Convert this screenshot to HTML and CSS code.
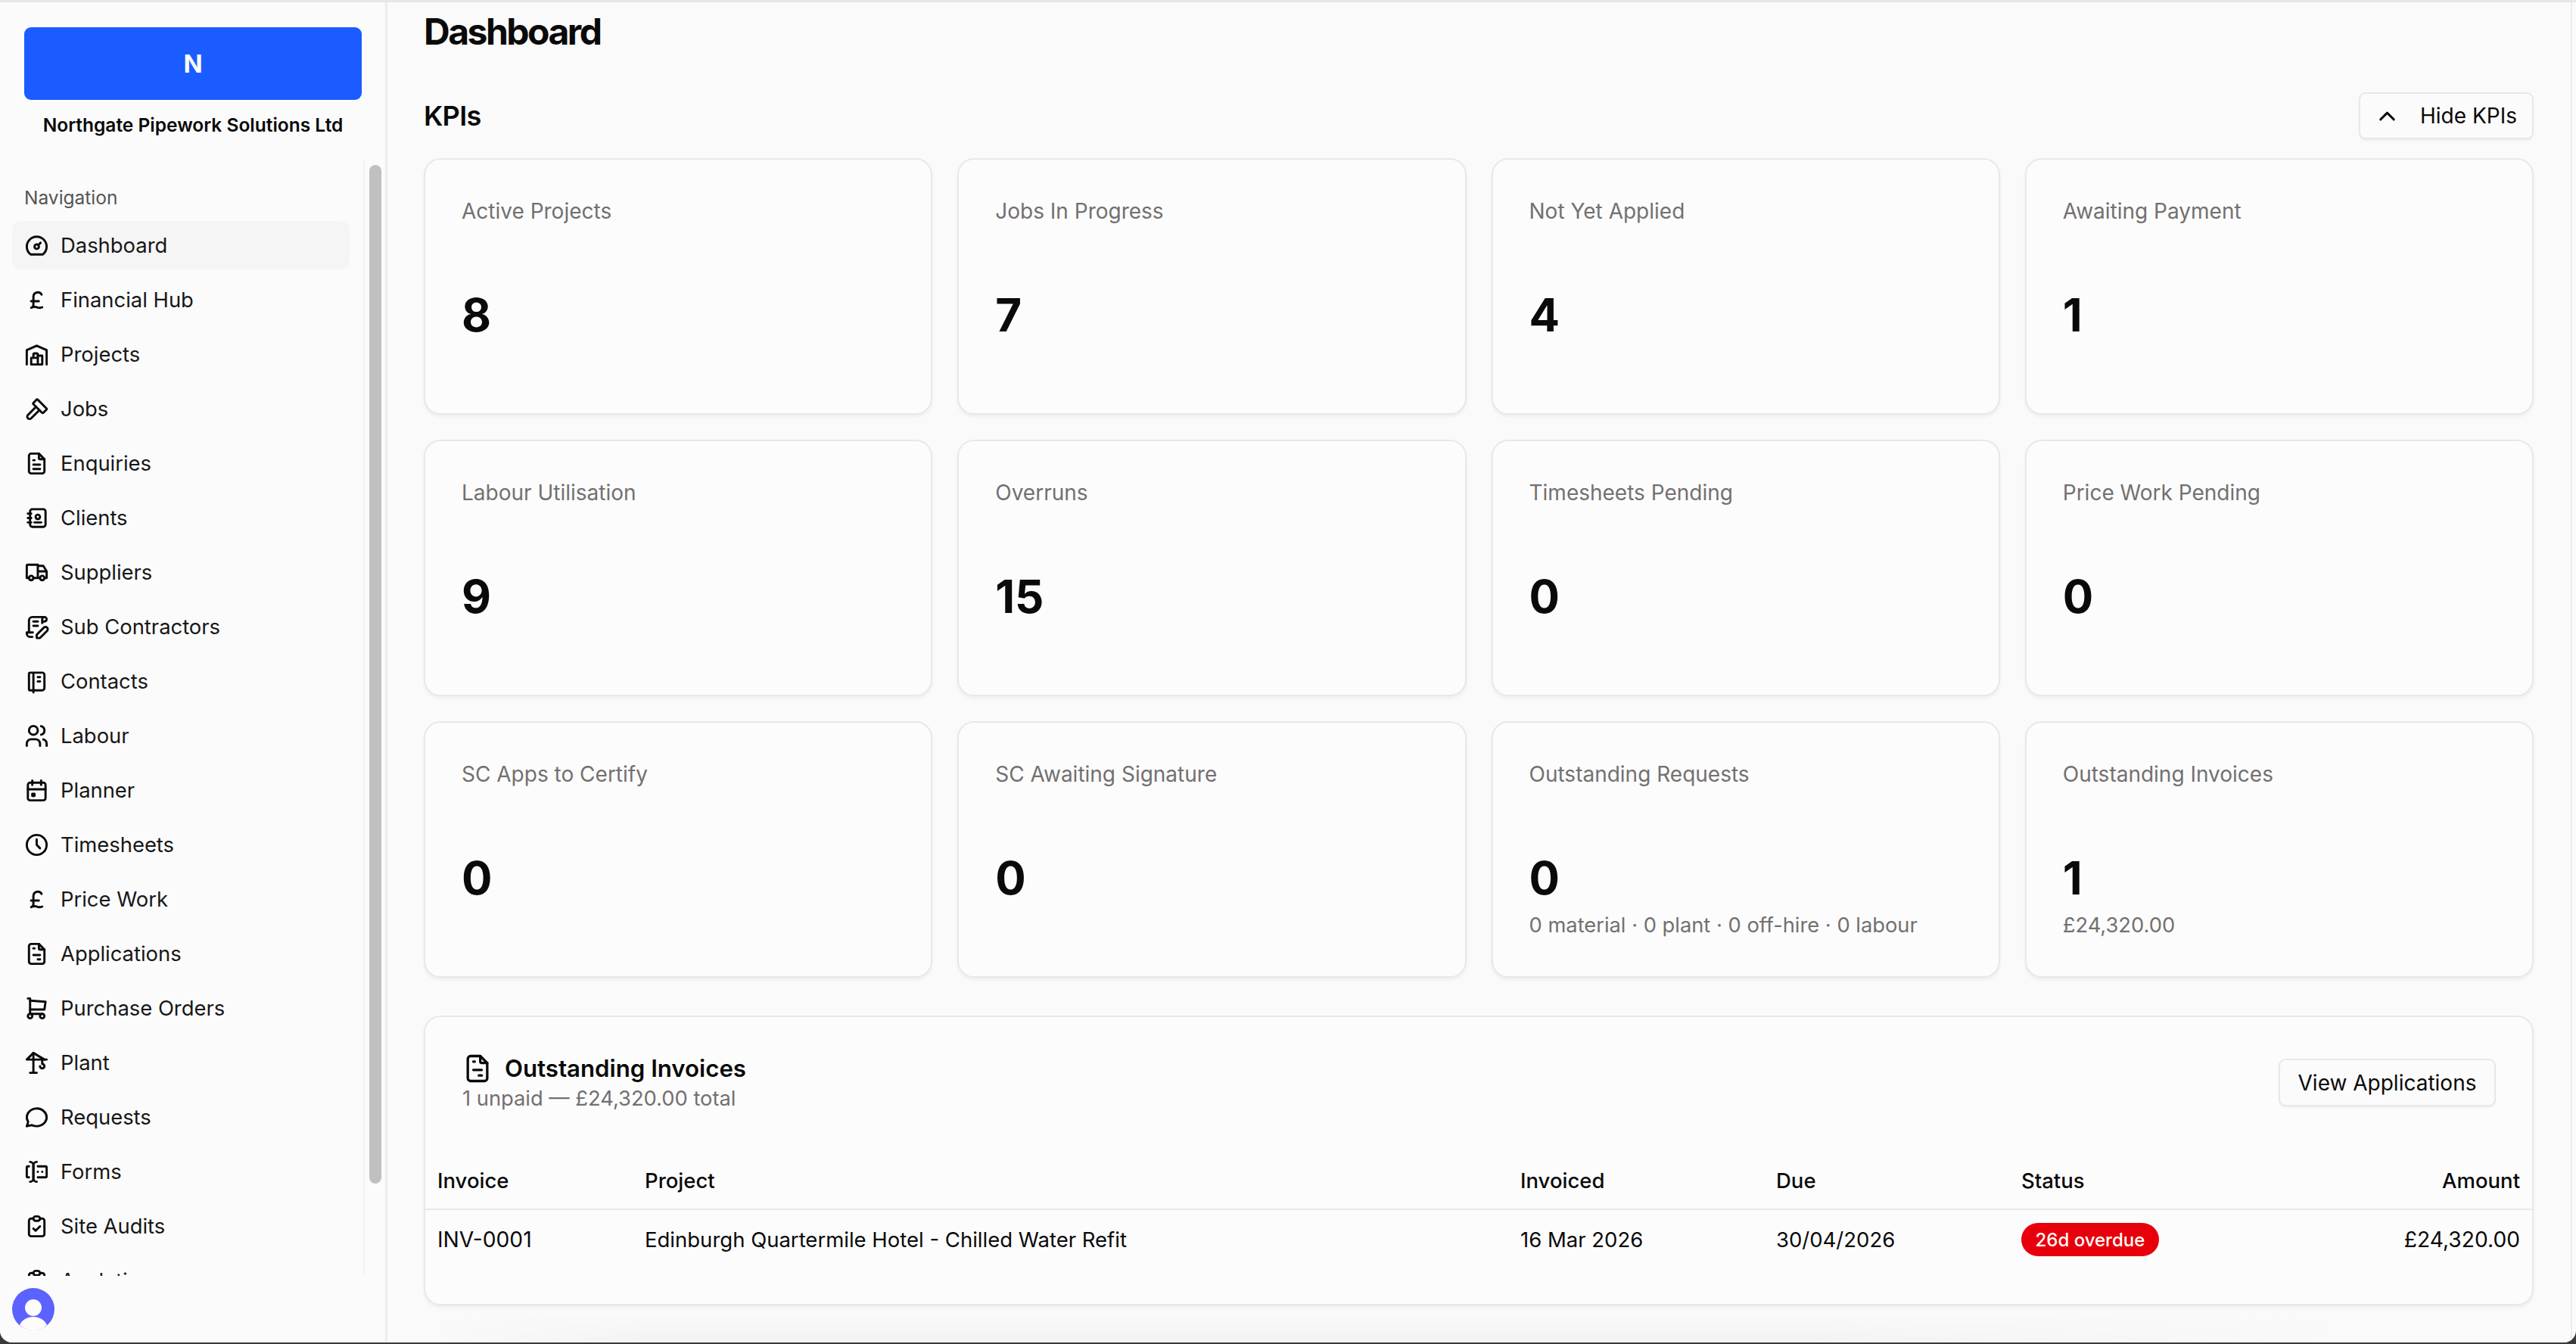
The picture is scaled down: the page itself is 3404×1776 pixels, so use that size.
FILE: index.html
```html
<!DOCTYPE html>
<html lang="en">
<head>
<meta charset="utf-8">
<title>Dashboard</title>
<link rel="stylesheet" href="styles.css">
</head>
<body>
<div class="window">
  <aside class="sidebar">
    <div class="brand">
      <div class="logo">N</div>
      <div class="company">Northgate Pipework Solutions Ltd</div>
    </div>
    <div class="nav-wrap">
      <nav class="nav">
        <div class="nav-label">Navigation</div>
        <a class="nav-item active"><svg class="ico" viewBox="0 0 24 24"><path d="M10 13a2 2 0 1 0 4 0a2 2 0 1 0 -4 0"/><path d="M13.45 11.55l2.05 -2.05"/><path d="M6.4 20a9 9 0 1 1 11.2 0z"/></svg><span>Dashboard</span></a>
        <a class="nav-item"><svg class="ico" viewBox="0 0 24 24"><path d="M17 18.5a6 6 0 0 1 -5 0a6 6 0 0 0 -5 .5a3 3 0 0 0 2 -2.5v-7.5a4 4 0 0 1 7.45 -2m-2.55 6h-7"/></svg><span>Financial Hub</span></a>
        <a class="nav-item"><svg class="ico" viewBox="0 0 24 24"><path d="M3 21v-13l9 -4l9 4v13"/><path d="M13 13h4v8h-10v-6h6"/><path d="M13 21v-9a1 1 0 0 0 -1 -1h-2a1 1 0 0 0 -1 1v3"/></svg><span>Projects</span></a>
        <a class="nav-item"><svg class="ico" viewBox="0 0 24 24"><path d="M11.414 10l-7.383 7.418a2.091 2.091 0 0 0 0 2.967a2.11 2.11 0 0 0 2.976 0l7.407 -7.385"/><path d="M18.121 15.293l2.586 -2.586a1 1 0 0 0 0 -1.414l-7.586 -7.586a1 1 0 0 0 -1.414 0l-2.586 2.586a1 1 0 0 0 0 1.414l7.586 7.586a1 1 0 0 0 1.414 0z"/></svg><span>Jobs</span></a>
        <a class="nav-item"><svg class="ico" viewBox="0 0 24 24"><path d="M14 3v4a1 1 0 0 0 1 1h4"/><path d="M17 21h-10a2 2 0 0 1 -2 -2v-14a2 2 0 0 1 2 -2h7l5 5v11a2 2 0 0 1 -2 2z"/><path d="M9 9h1"/><path d="M9 13h6"/><path d="M9 17h6"/></svg><span>Enquiries</span></a>
        <a class="nav-item"><svg class="ico" viewBox="0 0 24 24"><path d="M20 6v12a2 2 0 0 1 -2 2h-10a2 2 0 0 1 -2 -2v-12a2 2 0 0 1 2 -2h10a2 2 0 0 1 2 2z"/><path d="M10 16h6"/><path d="M11 11a2 2 0 1 0 4 0a2 2 0 1 0 -4 0"/><path d="M4 8h3"/><path d="M4 12h3"/><path d="M4 16h3"/></svg><span>Clients</span></a>
        <a class="nav-item"><svg class="ico" viewBox="0 0 24 24"><path d="M5 17a2 2 0 1 0 4 0a2 2 0 1 0 -4 0"/><path d="M15 17a2 2 0 1 0 4 0a2 2 0 1 0 -4 0"/><path d="M5 17h-2v-11a1 1 0 0 1 1 -1h9v12m-4 0h6m4 0h2v-6h-8m0 -5h5l3 5"/></svg><span>Suppliers</span></a>
        <a class="nav-item"><svg class="ico" viewBox="0 0 24 24"><path d="M8 21h-2a3 3 0 0 1 -3 -3v-1h5.5"/><path d="M17 8.5v-3.5a2 2 0 1 1 2 2h-2"/><path d="M19 3h-11a3 3 0 0 0 -3 3v11"/><path d="M9 7h4"/><path d="M9 11h4"/><path d="M18.42 12.61a2.1 2.1 0 0 1 2.97 2.97l-6.39 6.42h-3v-3z"/></svg><span>Sub Contractors</span></a>
        <a class="nav-item"><svg class="ico" viewBox="0 0 24 24"><path d="M6 4h11a2 2 0 0 1 2 2v12a2 2 0 0 1 -2 2h-11a1 1 0 0 1 -1 -1v-14a1 1 0 0 1 1 -1m3 0v18"/><path d="M13 8h2"/><path d="M13 12h2"/></svg><span>Contacts</span></a>
        <a class="nav-item"><svg class="ico" viewBox="0 0 24 24"><path d="M5 7a4 4 0 1 0 8 0a4 4 0 1 0 -8 0"/><path d="M3 21v-2a4 4 0 0 1 4 -4h4a4 4 0 0 1 4 4v2"/><path d="M16 3.13a4 4 0 0 1 0 7.75"/><path d="M21 21v-2a4 4 0 0 0 -3 -3.85"/></svg><span>Labour</span></a>
        <a class="nav-item"><svg class="ico" viewBox="0 0 24 24"><path d="M4 7a2 2 0 0 1 2 -2h12a2 2 0 0 1 2 2v12a2 2 0 0 1 -2 2h-12a2 2 0 0 1 -2 -2z"/><path d="M16 3v4"/><path d="M8 3v4"/><path d="M4 11h16"/><path d="M8 15h2v2h-2z"/></svg><span>Planner</span></a>
        <a class="nav-item"><svg class="ico" viewBox="0 0 24 24"><path d="M3 12a9 9 0 1 0 18 0a9 9 0 0 0 -18 0"/><path d="M12 7v5l3 3"/></svg><span>Timesheets</span></a>
        <a class="nav-item"><svg class="ico" viewBox="0 0 24 24"><path d="M17 18.5a6 6 0 0 1 -5 0a6 6 0 0 0 -5 .5a3 3 0 0 0 2 -2.5v-7.5a4 4 0 0 1 7.45 -2m-2.55 6h-7"/></svg><span>Price Work</span></a>
        <a class="nav-item"><svg class="ico" viewBox="0 0 24 24"><path d="M14 3v4a1 1 0 0 0 1 1h4"/><path d="M17 21h-10a2 2 0 0 1 -2 -2v-14a2 2 0 0 1 2 -2h7l5 5v11a2 2 0 0 1 -2 2z"/><path d="M9 7h1"/><path d="M9 13h6"/><path d="M13 17h2"/></svg><span>Applications</span></a>
        <a class="nav-item"><svg class="ico" viewBox="0 0 24 24"><path d="M4 19a2 2 0 1 0 4 0a2 2 0 1 0 -4 0"/><path d="M15 19a2 2 0 1 0 4 0a2 2 0 1 0 -4 0"/><path d="M17 17h-11v-14h-2"/><path d="M6 5l14 1l-1 7h-13"/></svg><span>Purchase Orders</span></a>
        <a class="nav-item"><svg class="ico" viewBox="0 0 24 24"><path d="M6 21h6"/><path d="M9 21v-18l-6 6h18"/><path d="M9 3l10 6"/><path d="M17 9v4a2 2 0 1 1 -2 2"/></svg><span>Plant</span></a>
        <a class="nav-item"><svg class="ico" viewBox="0 0 24 24"><path d="M3 20l1.3 -3.9c-2.324 -3.437 -1.426 -7.872 2.1 -10.374c3.526 -2.501 8.59 -2.296 11.845 .48c3.255 2.777 3.695 7.266 1.029 10.501c-2.666 3.235 -7.615 4.215 -11.574 2.293l-4.7 1"/></svg><span>Requests</span></a>
        <a class="nav-item"><svg class="ico" viewBox="0 0 24 24"><path d="M12 3a3 3 0 0 0 -3 3v12a3 3 0 0 0 3 3"/><path d="M6 3a3 3 0 0 1 3 3v12a3 3 0 0 1 -3 3"/><path d="M13 7h7a1 1 0 0 1 1 1v8a1 1 0 0 1 -1 1h-7"/><path d="M5 7h-1a1 1 0 0 0 -1 1v8a1 1 0 0 0 1 1h1"/><path d="M17 12h.01"/><path d="M13 12h.01"/></svg><span>Forms</span></a>
        <a class="nav-item"><svg class="ico" viewBox="0 0 24 24"><path d="M9 5h-2a2 2 0 0 0 -2 2v12a2 2 0 0 0 2 2h10a2 2 0 0 0 2 -2v-12a2 2 0 0 0 -2 -2h-2"/><path d="M9 5a2 2 0 0 1 2 -2h2a2 2 0 0 1 2 2a2 2 0 0 1 -2 2h-2a2 2 0 0 1 -2 -2z"/><path d="M9 14l2 2l4 -4"/></svg><span>Site Audits</span></a>
        <a class="nav-item"><svg class="ico" viewBox="0 0 24 24"><path d="M9 5h-2a2 2 0 0 0 -2 2v12a2 2 0 0 0 2 2h10a2 2 0 0 0 2 -2v-12a2 2 0 0 0 -2 -2h-2"/><path d="M9 5a2 2 0 0 1 2 -2h2a2 2 0 0 1 2 2a2 2 0 0 1 -2 2h-2a2 2 0 0 1 -2 -2z"/></svg><span>Analytics</span></a>
      </nav>
      <div class="track"><div class="thumb"></div></div>
    </div>
    <div class="side-foot">
      <svg class="avatar" viewBox="0 0 56 56"><circle class="av-bg" cx="28" cy="28" r="28"/><circle class="av-fg" cx="28" cy="26" r="11"/><path class="av-fg" d="M10 49c3-7 10-11 18-11s15 4 18 11c-5 4.500-11 7-18 7s-13-2.500-18-7z"/></svg>
    </div>
  </aside>
  <main class="main">
    <h1 class="title">Dashboard</h1>
    <div class="kpi-head">
      <h2 class="kpi-title">KPIs</h2>
      <button class="btn btn-toggle"><svg class="chev" viewBox="0 0 24 24"><path d="M6 15l6 -6l6 6"/></svg><span>Hide KPIs</span></button>
    </div>
    <section class="kpis">
      <div class="card"><div class="k-label">Active Projects</div><div class="k-value">8</div></div>
      <div class="card"><div class="k-label">Jobs In Progress</div><div class="k-value">7</div></div>
      <div class="card"><div class="k-label">Not Yet Applied</div><div class="k-value">4</div></div>
      <div class="card"><div class="k-label">Awaiting Payment</div><div class="k-value">1</div></div>
      <div class="card"><div class="k-label">Labour Utilisation</div><div class="k-value">9</div></div>
      <div class="card"><div class="k-label">Overruns</div><div class="k-value">15</div></div>
      <div class="card"><div class="k-label">Timesheets Pending</div><div class="k-value">0</div></div>
      <div class="card"><div class="k-label">Price Work Pending</div><div class="k-value">0</div></div>
      <div class="card"><div class="k-label">SC Apps to Certify</div><div class="k-value">0</div></div>
      <div class="card"><div class="k-label">SC Awaiting Signature</div><div class="k-value">0</div></div>
      <div class="card"><div class="k-label">Outstanding Requests</div><div class="k-value">0</div><div class="k-sub">0 material · 0 plant · 0 off-hire · 0 labour</div></div>
      <div class="card"><div class="k-label">Outstanding Invoices</div><div class="k-value">1</div><div class="k-sub">£24,320.00</div></div>
    </section>
    <section class="panel">
      <div class="panel-head">
        <div class="panel-text">
          <div class="panel-title"><svg class="panel-ico" viewBox="0 0 24 24"><path d="M14 3v4a1 1 0 0 0 1 1h4"/><path d="M17 21h-10a2 2 0 0 1 -2 -2v-14a2 2 0 0 1 2 -2h7l5 5v11a2 2 0 0 1 -2 2z"/><path d="M9 7h1"/><path d="M9 13h6"/><path d="M13 17h2"/></svg><span>Outstanding Invoices</span></div>
          <div class="panel-sub">1 unpaid — £24,320.00 total</div>
        </div>
        <button class="btn btn-view">View Applications</button>
      </div>
      <table class="table">
        <thead>
          <tr><th class="c-inv">Invoice</th><th class="c-proj">Project</th><th class="c-date">Invoiced</th><th class="c-due">Due</th><th class="c-status">Status</th><th class="c-amt">Amount</th></tr>
        </thead>
        <tbody>
          <tr><td class="c-code">INV-0001</td><td>Edinburgh Quartermile Hotel - Chilled Water Refit</td><td>16 Mar 2026</td><td>30/04/2026</td><td><span class="pill">26d overdue</span></td><td class="c-amt c-code">£24,320.00</td></tr>
        </tbody>
      </table>
    </section>
  </main>
</div>
</body>
</html>
```

FILE: styles.css
```css
* { box-sizing: border-box; }
html, body { margin: 0; height: 100%; }
body { background: #3b3a38; overflow: hidden; font-family: Inter, "Liberation Sans", sans-serif; color: #0a0a0a; }
.window { display: flex; height: 1774px; background: #fbfbfb; border-top: 3px solid #e7e7e7; border-radius: 0 0 16px 16px; overflow: hidden; position: relative; }
.sidebar { width: 512px; flex: none; display: flex; flex-direction: column; background: #fbfbfb; border-right: 3px solid #ececec; }
.brand { height: 209px; padding: 33px 0 0 32px; flex: none; }
.logo { width: 446px; height: 96px; border-radius: 9px; background: #1a5cff; color: #fff; font-weight: 700; font-size: 33px; display: flex; align-items: center; justify-content: center; }
.company { width: 446px; margin-top: 16px; text-align: center; font-size: 24.5px; line-height: 34px; font-weight: 600; color: #0a0a0a; }
.nav-wrap { flex: 1; min-height: 0; display: flex; }
.nav { width: 482px; flex: none; border-right: 2px solid #f2f2f2; overflow: hidden; padding: 29px 18px 0 16px; }
.nav-label { padding-left: 16px; font-size: 24.5px; line-height: 40px; height: 51px; color: #555; font-weight: 400; }
.nav-item { display: flex; align-items: center; gap: 14px; height: 64px; margin-bottom: 8px; padding-left: 15px; border-radius: 12px; font-size: 27.4px; color: #171717; }
.nav-item.active { background: #f5f5f5; }
.ico { width: 35px; height: 35px; flex: none; fill: none; stroke: #0a0a0a; stroke-width: 2; stroke-linecap: round; stroke-linejoin: round; }
.track { flex: 1; padding: 6px 0 0 6px; }
.thumb { width: 16px; height: 1346px; border-radius: 8px; background: #c0c0c0; }
.side-foot { height: 88px; flex: none; padding: 16px 0 0 16px; }
.avatar { display: block; width: 56px; height: 56px; }
.av-bg { fill: #5b62ff; }
.av-fg { fill: #fcfcfc; }
.main { flex: 1; min-width: 0; margin-right: 5px; padding: 0 49px 0 48px; border-right: 2px solid #ececec; position: relative; background: #fafafa; }
.main::after { content: ""; position: absolute; left: 60px; right: 300px; bottom: 0; height: 40px; background: linear-gradient(180deg, rgba(240,240,240,0), #f2f2f2); -webkit-mask-image: linear-gradient(90deg, transparent, #000 12%, #000 70%, transparent); mask-image: linear-gradient(90deg, transparent, #000 12%, #000 70%, transparent); }
.title { margin: 0; height: 78px; line-height: 78px; font-size: 48px; font-weight: 700; letter-spacing: -2.5px; }
.kpi-head { margin-top: 41px; height: 62px; display: flex; align-items: center; justify-content: space-between; }
.kpi-title { margin: 0; font-size: 36px; font-weight: 600; letter-spacing: -0.7px; }
.btn { font-family: inherit; font-size: 28px; color: #0a0a0a; background: #fbfbfb; border: 2px solid #e8e8e8; border-radius: 9px; box-shadow: 0 2px 3px rgba(0,0,0,.05); }
.btn-toggle { width: 231px; height: 62px; padding: 0 0 0 18px; display: flex; align-items: center; gap: 26px; }
.chev { width: 35px; height: 35px; flex: none; fill: none; stroke: #0a0a0a; stroke-width: 2; stroke-linecap: round; stroke-linejoin: round; }
.kpis { margin-top: 25px; display: grid; grid-template-columns: repeat(4, 1fr); grid-auto-rows: 339px; gap: 33px; }
.card { padding: 48px 48px 0; background: #fcfcfc; border: 2px solid #e8e8e8; border-radius: 22px; box-shadow: 0 3px 4px rgba(0,0,0,.05); }
.k-label { font-size: 28px; line-height: 40px; color: #737070; }
.k-value { margin-top: 81px; font-size: 60px; line-height: 72px; font-weight: 700; color: #0a0a0a; }
.k-sub { margin-top: 7px; font-size: 27.3px; line-height: 40px; color: #737070; }
.panel { margin-top: 50px; height: 383px; background: #fcfcfc; border: 2px solid #e8e8e8; border-radius: 22px; box-shadow: 0 3px 4px rgba(0,0,0,.05); }
.panel-head { display: flex; justify-content: space-between; padding: 48px 48px 0 47px; }
.panel-title { display: flex; align-items: center; gap: 14px; height: 40px; font-size: 31.2px; font-weight: 600; }
.panel-ico { width: 44px; height: 44px; flex: none; fill: none; stroke: #0a0a0a; stroke-width: 1.8; stroke-linecap: round; stroke-linejoin: round; }
.panel-sub { margin-left: 2px; font-size: 27.3px; line-height: 40px; color: #737070; }
.btn-view { width: 287px; height: 63px; margin-top: 7px; padding: 0; }
.table { width: 100%; margin-top: 50px; border-collapse: collapse; table-layout: fixed; font-size: 27.5px; }
.table th { height: 76px; padding: 0 16px; text-align: left; font-weight: 500; border-bottom: 2px solid #e8e8e8; }
.table td { height: 79px; padding: 0 16px; }
.table .c-amt { text-align: right; }
.table .c-code { font-size: 28.2px; }
.c-inv { width: 274px; }
.c-proj { width: 1157px; }
.c-date { width: 338px; }
.c-due { width: 324px; }
.c-status { width: 346px; }
.pill { display: inline-flex; align-items: center; height: 44px; padding: 0 18.5px; border-radius: 22px; background: #e7000b; color: #fff; font-size: 24px; font-weight: 500; }
```
